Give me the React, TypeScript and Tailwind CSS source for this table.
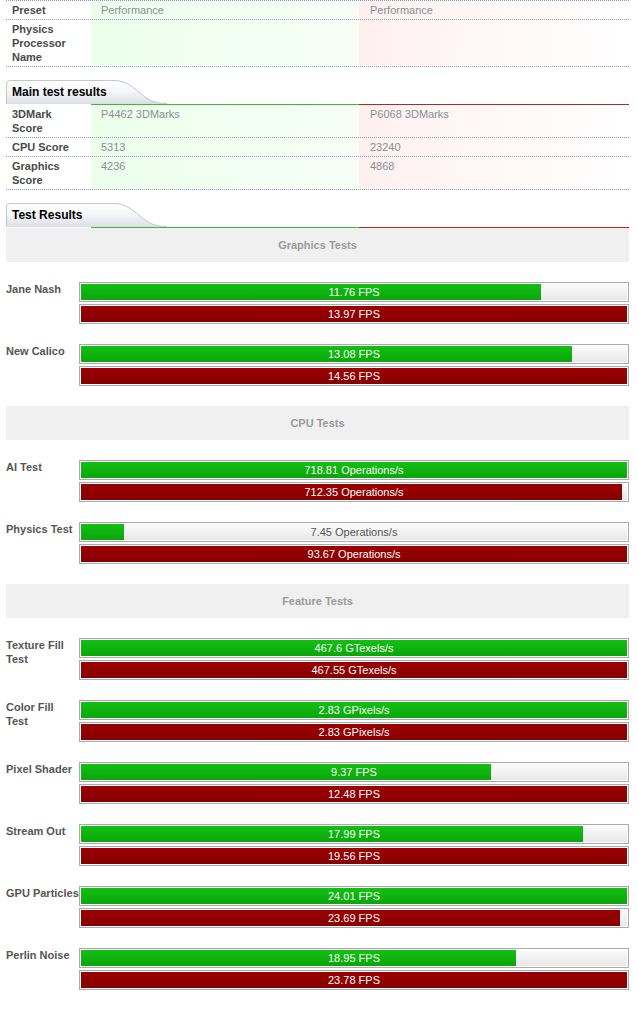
import React from "react";

type Info = { label: string[]; a: string; b: string };

const presetRows: Info[] = [
  { label: ["Preset"], a: "Performance", b: "Performance" },
  { label: ["Physics", "Processor", "Name"], a: "", b: "" },
];

const mainRows: Info[] = [
  { label: ["3DMark", "Score"], a: "P4462 3DMarks", b: "P6068 3DMarks" },
  { label: ["CPU Score"], a: "5313", b: "23240" },
  { label: ["Graphics", "Score"], a: "4236", b: "4868" },
];

type Test = { label: string[]; a: number; b: number; unit: string };

const groups: { title: string; tests: Test[] }[] = [
  {
    title: "Graphics Tests",
    tests: [
      { label: ["Jane Nash"], a: 11.76, b: 13.97, unit: "FPS" },
      { label: ["New Calico"], a: 13.08, b: 14.56, unit: "FPS" },
    ],
  },
  {
    title: "CPU Tests",
    tests: [
      { label: ["AI Test"], a: 718.81, b: 712.35, unit: "Operations/s" },
      { label: ["Physics Test"], a: 7.45, b: 93.67, unit: "Operations/s" },
    ],
  },
  {
    title: "Feature Tests",
    tests: [
      { label: ["Texture Fill", "Test"], a: 467.6, b: 467.55, unit: "GTexels/s" },
      { label: ["Color Fill", "Test"], a: 2.83, b: 2.83, unit: "GPixels/s" },
      { label: ["Pixel Shader"], a: 9.37, b: 12.48, unit: "FPS" },
      { label: ["Stream Out"], a: 17.99, b: 19.56, unit: "FPS" },
      { label: ["GPU Particles"], a: 24.01, b: 23.69, unit: "FPS" },
      { label: ["Perlin Noise"], a: 18.95, b: 23.78, unit: "FPS" },
    ],
  },
];

function Lines({ lines }: { lines: string[] }) {
  return (
    <>
      {lines.map((l) => (
        <div key={l} className="whitespace-nowrap">
          {l}
        </div>
      ))}
    </>
  );
}

function InfoTable({ rows, top }: { rows: Info[]; top?: boolean }) {
  return (
    <div className={top ? "border-t border-dotted border-[#8e9aa8]" : ""}>
      {rows.map((r) => (
        <div
          key={r.label.join(" ")}
          className="grid grid-cols-[85px_268px_270px] border-b border-dotted border-[#8e9aa8] text-[11px] leading-[14px]"
        >
          <div className="py-[2px] pl-[6px] font-bold text-[#4a4a4a]">
            <Lines lines={r.label} />
          </div>
          <div className="py-[2px] pl-[10px] text-[#8a8f96] bg-gradient-to-r from-[#ebffeb] to-[#f7fff7]">
            {r.a}
          </div>
          <div className="py-[2px] pl-[11px] text-[#8a8f96] bg-gradient-to-r from-[#fff0f0] to-[#ffffff]">
            {r.b}
          </div>
        </div>
      ))}
    </div>
  );
}

function Tab({ title }: { title: string }) {
  return (
    <div>
      <div className="relative h-[24px] flex items-center pl-[6px]">
        <svg className="absolute left-0 top-0" width="170" height="24" viewBox="0 0 170 24">
          <defs>
            <linearGradient id="tabg" x1="0" y1="0" x2="0" y2="1">
              <stop offset="0" stopColor="#ffffff" />
              <stop offset="0.45" stopColor="#f6f7f9" />
              <stop offset="1" stopColor="#dcdfe5" />
            </linearGradient>
          </defs>
          <path
            d="M0.5 24 L0.5 4 Q0.5 0.5 4 0.5 L108 0.5 C120 0.5 125 6 134 13 C143 20 148 23.5 161 23.5 L161 24 Z"
            fill="url(#tabg)"
          />
          <path
            d="M0.5 24 L0.5 4 Q0.5 0.5 4 0.5 L108 0.5 C120 0.5 125 6 134 13 C143 20 148 23.5 161 23.5"
            fill="none"
            stroke="#c4c6ca"
            strokeWidth="1"
          />
        </svg>
        <span className="relative text-[12px] font-bold text-black">{title}</span>
      </div>
      <div className="grid grid-cols-[85px_268px_270px] h-px">
        <div />
        <div className="bg-[#3cb83c]" />
        <div className="bg-[#b0262a]" />
      </div>
    </div>
  );
}

function Bar({ value, max, unit, red }: { value: number; max: number; unit: string; red?: boolean }) {
  const pct = (value / max) * 100;
  const light = pct > 55;
  return (
    <div className="h-[20px] border border-[#ababab] p-px bg-white">
      <div className="relative h-full bg-gradient-to-b from-[#fbfbfb] to-[#e8e8e8]">
        <div
          className={
            red
              ? "h-full bg-gradient-to-b from-[#9c0000] to-[#860000]"
              : "h-full bg-gradient-to-b from-[#13c013] to-[#0aa60a]"
          }
          style={{ width: `${pct}%` }}
        />
        <div
          className={
            "absolute inset-0 flex items-center justify-center text-[11px] leading-[16px] " +
            (light ? "text-white" : "text-[#555]")
          }
        >
          {value} {unit}
        </div>
      </div>
    </div>
  );
}

export default function App() {
  return (
    <div className="min-h-screen bg-white font-['Liberation_Sans',Arial,sans-serif]">
      <div className="ml-[6px] w-[623px] pb-[24px]">
        <InfoTable rows={presetRows} top />

        <div className="mt-[13px]">
          <Tab title="Main test results" />
          <InfoTable rows={mainRows} />
        </div>

        <div className="mt-[13px]">
          <Tab title="Test Results" />
        </div>

        {groups.map((g, gi) => (
          <div key={g.title} className={gi === 0 ? "" : "mt-[20px]"}>
            <div className="h-[34px] bg-[#f0f0f0] flex items-center justify-center text-[11px] font-bold text-[#9a9a9a]">
              {g.title}
            </div>
            {g.tests.map((t) => {
              const max = Math.max(t.a, t.b);
              return (
                <div key={t.label.join(" ")} className="flex pt-[20px]">
                  <div className="w-[73px] shrink-0 text-[11px] leading-[14px] font-bold text-[#555]">
                    <Lines lines={t.label} />
                  </div>
                  <div className="flex-1 flex flex-col gap-[2px]">
                    <Bar value={t.a} max={max} unit={t.unit} />
                    <Bar value={t.b} max={max} unit={t.unit} red />
                  </div>
                </div>
              );
            })}
          </div>
        ))}
      </div>
    </div>
  );
}
